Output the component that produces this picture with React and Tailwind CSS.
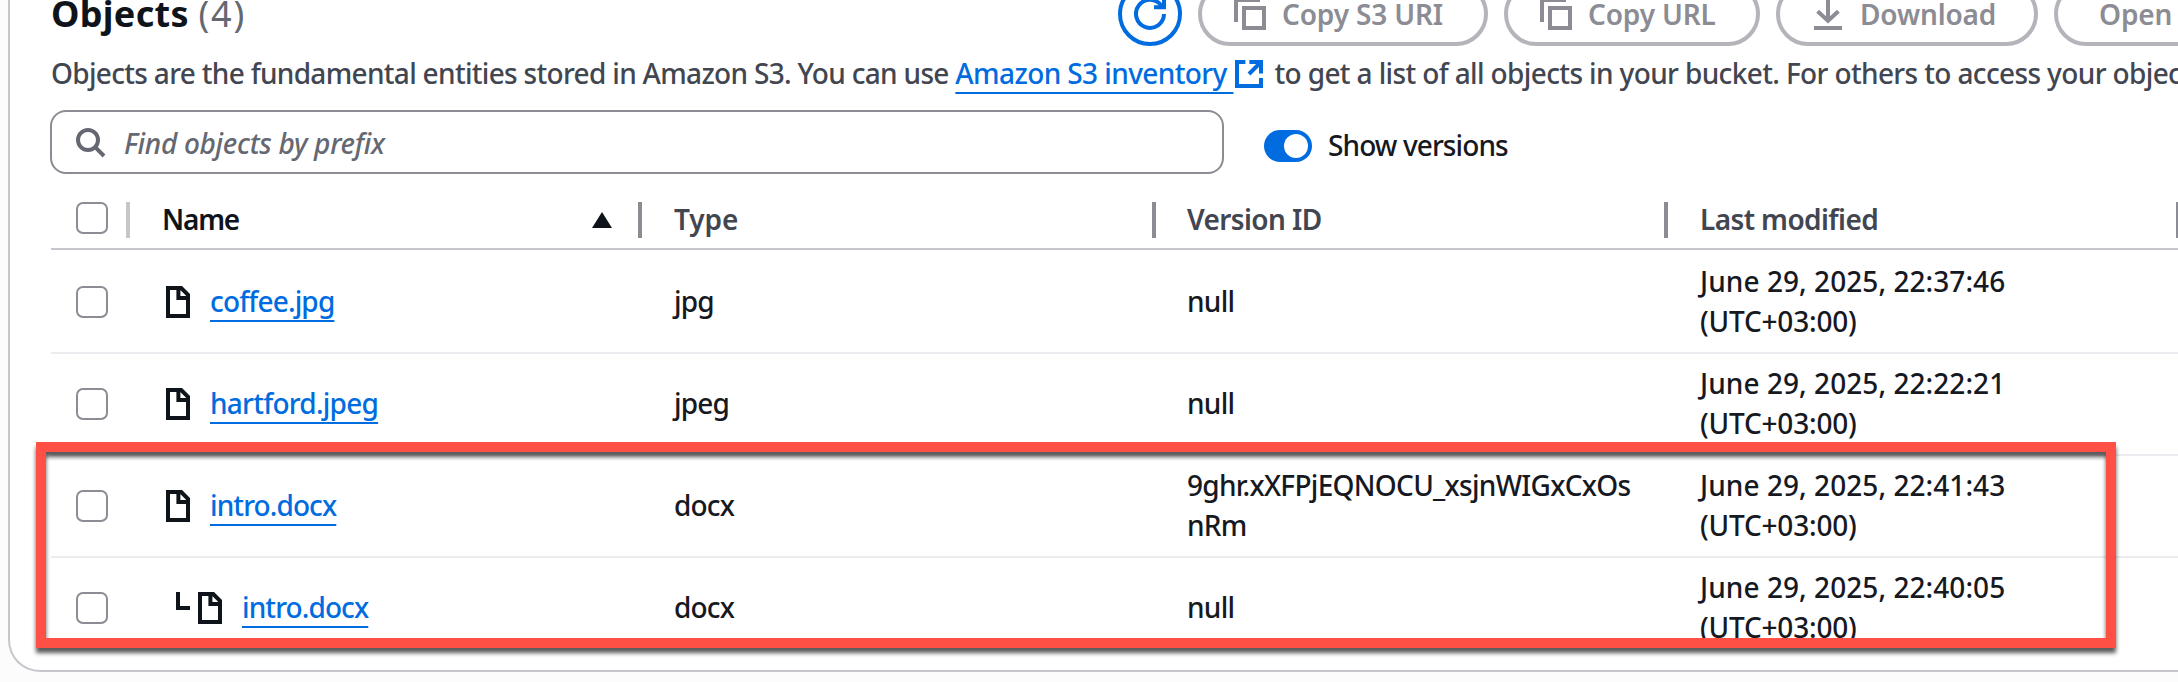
import React from 'react';

const iconBase = {
  width: 32,
  height: 32,
  viewBox: '0 0 16 16',
  fill: 'none',
  stroke: 'currentColor',
  strokeWidth: 2,
};

function Icon({ d, className = '' }) {
  return (
    <svg {...iconBase} className={`shrink-0 ${className}`}>
      <path d={d} />
    </svg>
  );
}

const COPY = 'M5 5h10v10H5zM1 12V1h12';
const DOWNLOAD = 'M8 0v11.5M2.8 6.6L8 11.4l5.2-4.8M1 15h14';
const EXTERNAL = 'M14 10v4H2V2h4.2M8.2 2H14v5.8M14 2L8 8';
const FILE = 'M3 1h6.6L13 4.4V15H3zM8.2 1v5H13';
const REFRESH = 'M15 8a7 7 0 1 1-1.2-4M10 4.6h5V-1';
const SEARCH = 'M10.6 10.6L15 15M7 2a5 5 0 1 0 0 10a5 5 0 1 0 0-10z';

function Button({ icon, label, width }) {
  return (
    <button
      className={`flex h-16 shrink-0 items-center rounded-full border-4 border-[#b4b4bb] pl-8 text-[28px] leading-10 font-semibold tracking-[-0.15px] whitespace-nowrap text-[#8c8c94] ${width}`}
    >
      {icon && <Icon d={icon} className="mr-4" />}
      {label}
    </button>
  );
}

function Checkbox({ className = '' }) {
  return <span className={`size-8 shrink-0 rounded-[7px] border-2 border-[#8c8c94] bg-white ${className}`} />;
}

function HeadCell({ label, sorted, className }) {
  return (
    <div className={`flex items-center ${className}`}>
      <span className={`flex-1 font-semibold ${sorted ? 'text-[#0f141a]' : 'text-[#424650]'}`}>{label}</span>
      {sorted && (
        <svg width="20" height="16" viewBox="0 0 20 16" className="mt-0.5 mr-[26px]">
          <path d="M10 0l10 16H0z" fill="#0f141a" />
        </svg>
      )}
      <span className="mt-0.5 h-9 w-1 bg-[#8c8c94]" />
    </div>
  );
}

const rows = [
  { name: 'coffee.jpg', type: 'jpg', version: 'null', time: '22:37:46', tracking: 'tracking-[-0.85px]' },
  { name: 'hartford.jpeg', type: 'jpeg', version: 'null', time: '22:22:21', tracking: 'tracking-[-0.75px]' },
  { name: 'intro.docx', type: 'docx', version: '9ghr.xXFPjEQNOCU_xsjnWIGxCxOsnRm', time: '22:41:43', tracking: 'tracking-[-0.9px]' },
  { name: 'intro.docx', type: 'docx', version: 'null', time: '22:40:05', nested: true, tracking: 'tracking-[-0.9px]' },
];

const COLUMNS = 'grid grid-cols-[79px_512px_514px_512px_512px]';
const LINK = 'text-[#006ce0] underline decoration-2 underline-offset-[8px]';

function Row({ row, last }) {
  return (
    <div className={`${COLUMNS} h-[102px] shrink-0 items-center border-b-2 ${last ? 'border-transparent' : 'border-[#ebebf0]'}`}>
      <div className="flex pl-[25px]">
        <Checkbox />
      </div>
      <div className="flex items-center pl-8">
        {row.nested && (
          <svg width="16" height="32" viewBox="0 0 16 32" fill="none" stroke="#0f141a" strokeWidth="4" className="ml-3 -mr-0.5">
            <path d="M4 0v16h12" />
          </svg>
        )}
        <Icon d={FILE} className={`text-[#0f141a] ${row.nested ? 'ml-1.5' : ''}`} />
        <a className={`mb-0.5 ml-4 ${LINK} ${row.tracking}`}>{row.name}</a>
      </div>
      <div className="mb-0.5 pl-8 tracking-[-0.8px]">{row.type}</div>
      <div className="mb-0.5 pr-8 pl-[31px] tracking-[-0.7px] break-all">{row.version}</div>
      <div className="mb-0.5 pl-8 tracking-[0.06px]">
        June 29, 2025, {row.time}
        <br />
        <span className="tracking-[-0.2px]">(UTC+03:00)</span>
      </div>
    </div>
  );
}

export default function App() {
  return (
    <div className="h-[682px] w-[2178px] overflow-hidden bg-[#fcfcfd] pl-2 font-['Noto_Sans',sans-serif] text-[28px] leading-10 font-medium text-[#16191f]">
      <section className="relative flex h-[672px] w-[2240px] flex-col rounded-bl-[32px] border-b-2 border-l-2 border-[#c6c6cd] bg-white pl-[41px]">
        <header className="-mt-[18px] flex h-16 shrink-0">
          <h1 className="w-[1067px] shrink-0 pt-[10px] text-[36px] leading-[44px] font-bold tracking-[0.3px] text-[#0f141a]">
            Objects <span className="font-normal tracking-[1.8px] text-[#656871]">(4)</span>
          </h1>
          <div className="flex gap-4">
            <button className="flex size-16 shrink-0 items-center justify-center rounded-full border-4 border-[#006ce0] text-[#006ce0]">
              <Icon d={REFRESH} />
            </button>
            <Button icon={COPY} label="Copy S3 URI" width="w-[290px]" />
            <Button icon={COPY} label="Copy URL" width="w-[256px]" />
            <Button icon={DOWNLOAD} label="Download" width="w-[262px]" />
            <Button label="Open" width="w-[200px] pl-[41px]" />
          </div>
        </header>

        <p className="mt-[7px] flex h-10 shrink-0 items-center tracking-[-0.685px] whitespace-pre text-[#424650]">
          <span>Objects are the fundamental entities stored in Amazon S3. You can use </span>
          <a className={`${LINK} tracking-[-0.6px]`}>Amazon S3 inventory </a>
          <Icon d={EXTERNAL} className="mt-0.5 text-[#006ce0]" />
          <span className="ml-[9px] tracking-[-0.63px]">to get a list of all objects in your bucket. For others to access your objects,</span>
        </p>

        <div className="mt-[17px] -ml-px flex h-16 shrink-0 items-center">
          <div className="flex h-16 w-[1174px] items-center rounded-2xl border-2 border-[#8c8c94] pl-[22px] text-[#656871]">
            <Icon d={SEARCH} />
            <span className="mt-0.5 ml-[18px] tracking-[-0.3px] italic">Find objects by prefix</span>
          </div>
          <span className="mt-2 ml-10 flex h-8 w-12 items-center justify-end rounded-full bg-[#006ce0] pr-1">
            <span className="size-6 rounded-full bg-white" />
          </span>
          <span className="mt-1.5 ml-4 tracking-[-0.9px]">Show versions</span>
        </div>

        <div className={`${COLUMNS} mb-0.5 h-[76px] shrink-0 items-center border-b-2 border-[#c6c6cd] pt-4`}>
          <div className="flex items-center pl-[25px]">
            <Checkbox className="-mt-0.5" />
            <span className="mt-0.5 ml-[18px] h-9 w-1 bg-[#c6c6cd]" />
          </div>
          <HeadCell label="Name" sorted className="pl-8 tracking-[-1.2px]" />
          <HeadCell label="Type" className="pl-8 tracking-[-0.1px]" />
          <HeadCell label="Version ID" className="pl-[31px] tracking-[-0.6px]" />
          <HeadCell label="Last modified" className="pl-8 tracking-[-0.6px]" />
        </div>
        {rows.map((row, i) => (
          <Row key={i} row={row} last={i === rows.length - 1} />
        ))}

        <div className="pointer-events-none absolute top-[442px] left-[26px] h-[206px] w-[2080px] border-[10px] border-[#ff5045] drop-shadow-[0_5px_2px_rgba(0,0,0,0.65)]" />
      </section>
    </div>
  );
}
